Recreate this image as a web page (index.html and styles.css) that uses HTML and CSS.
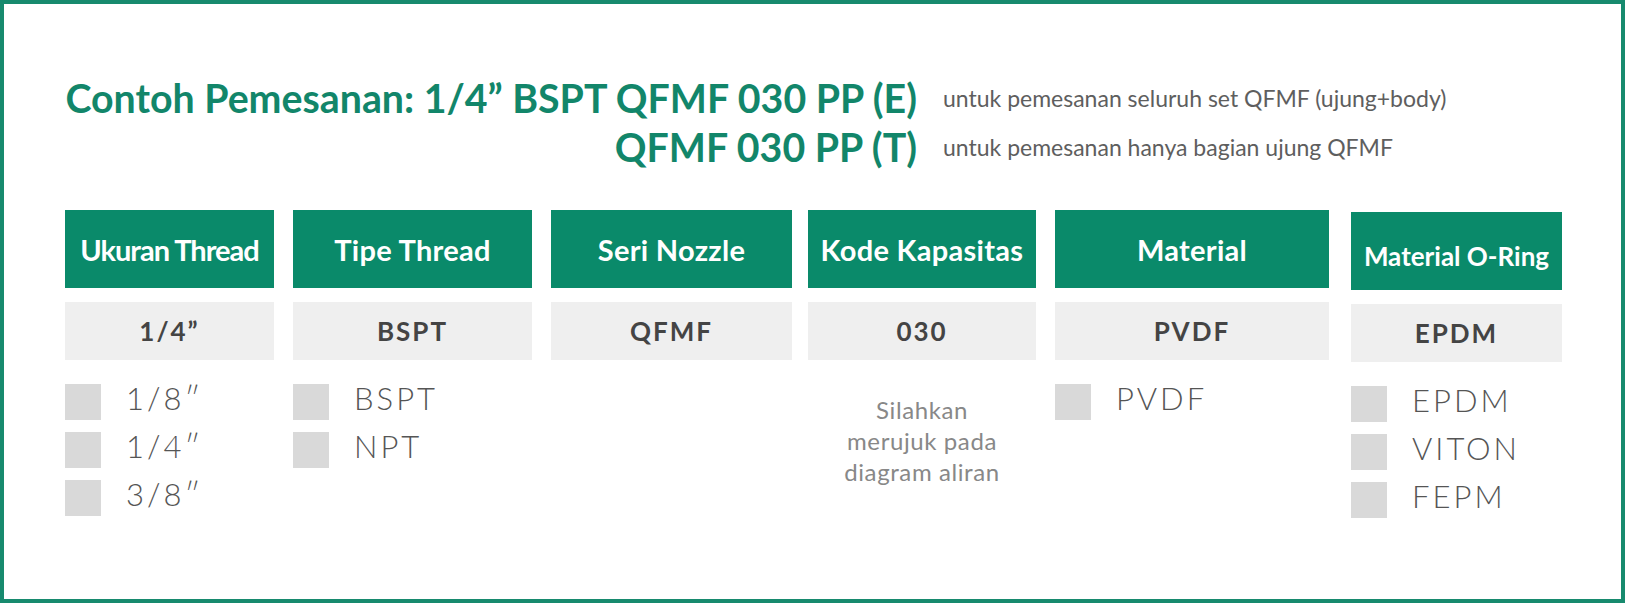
FILE: index.html
```html
<!DOCTYPE html>
<html lang="id">
<head>
<meta charset="utf-8">
<title>Contoh Pemesanan QFMF</title>
<link rel="stylesheet" href="styles.css">
</head>
<body>
<div class="frame">
  <div class="order">
    <div class="code">Contoh Pemesanan: 1/4” BSPT QFMF 030 PP (E)</div>
    <div class="note">untuk pemesanan seluruh set QFMF (ujung+body)</div>
    <div class="code">QFMF 030 PP (T)</div>
    <div class="note">untuk pemesanan hanya bagian ujung QFMF</div>
  </div>

  <div class="columns">
    <div class="col col-size">
      <div class="head head-tight">Ukuran Thread</div>
      <div class="value">1/4”</div>
      <div class="options">
        <div class="option"><span class="box"></span><span class="label">1/8″</span></div>
        <div class="option"><span class="box"></span><span class="label">1/4″</span></div>
        <div class="option"><span class="box"></span><span class="label">3/8″</span></div>
      </div>
    </div>
    <div class="col col-type">
      <div class="head">Tipe Thread</div>
      <div class="value">BSPT</div>
      <div class="options">
        <div class="option"><span class="box"></span><span class="label">BSPT</span></div>
        <div class="option"><span class="box"></span><span class="label">NPT</span></div>
      </div>
    </div>
    <div class="col col-series">
      <div class="head">Seri Nozzle</div>
      <div class="value">QFMF</div>
    </div>
    <div class="col col-code">
      <div class="head">Kode Kapasitas</div>
      <div class="value">030</div>
      <div class="hint">Silahkan<br>merujuk pada<br>diagram aliran</div>
    </div>
    <div class="col col-material">
      <div class="head">Material</div>
      <div class="value">PVDF</div>
      <div class="options">
        <div class="option"><span class="box"></span><span class="label">PVDF</span></div>
      </div>
    </div>
    <div class="col col-oring">
      <div class="head head-small">Material O-Ring</div>
      <div class="value">EPDM</div>
      <div class="options">
        <div class="option"><span class="box"></span><span class="label">EPDM</span></div>
        <div class="option"><span class="box"></span><span class="label">VITON</span></div>
        <div class="option"><span class="box"></span><span class="label">FEPM</span></div>
      </div>
    </div>
  </div>
</div>
</body>
</html>
```

FILE: styles.css
```css
html, body {
  margin: 0;
  padding: 0;
  background: #ffffff;
}

body {
  font-family: "Lato", "Liberation Sans", sans-serif;
}

.frame {
  box-sizing: border-box;
  width: 1625px;
  height: 603px;
  border: 4px solid #178a6e;
  padding: 69px 0 0 61px;
}

.order {
  display: grid;
  grid-template-columns: 852px auto;
  grid-auto-rows: 49px;
  column-gap: 26px;
  align-items: center;
}

.code {
  text-align: right;
  font-size: 39.3px;
  font-weight: 700;
  color: #12866a;
  line-height: 49px;
  white-space: nowrap;
}

.note {
  font-size: 23px;
  color: #5e5e5e;
  white-space: nowrap;
  line-height: 28px;
}

.columns {
  display: flex;
  gap: 19px;
  margin-top: 39px;
  align-items: flex-start;
}

.col-size { width: 209px; }
.col-type { width: 239px; }
.col-series { width: 241px; }
.col-code { width: 228px; margin-left: -3px; }
.col-material { width: 274px; }
.col-oring { width: 211px; margin-left: 3px; margin-top: 2px; }

.head {
  height: 78px;
  background: #0a8a6a;
  color: #ffffff;
  font-size: 29px;
  font-weight: 700;
  letter-spacing: 0.3px;
  display: flex;
  align-items: center;
  justify-content: center;
  white-space: nowrap;
}

.head-tight {
  letter-spacing: -1px;
}

.head-small {
  font-size: 26px;
  letter-spacing: 0;
  padding-top: 10px;
  box-sizing: border-box;
}

.value {
  margin-top: 14px;
  height: 58px;
  background: #efefef;
  color: #444444;
  font-size: 26px;
  font-weight: 700;
  letter-spacing: 2px;
  display: flex;
  align-items: center;
  justify-content: center;
}

.options {
  margin-top: 24px;
  display: flex;
  flex-direction: column;
  gap: 12px;
}

.option {
  display: flex;
  align-items: center;
  gap: 25px;
  height: 36px;
  font-size: 31px;
  font-weight: 300;
  letter-spacing: 3px;
  color: #555555;
}

.label {
  line-height: 28px;
  padding-bottom: 8px;
}

.box {
  width: 36px;
  height: 36px;
  background: #d9d9d9;
  flex: none;
}

.hint {
  margin-top: 34px;
  text-align: center;
  font-size: 24px;
  line-height: 31px;
  letter-spacing: 0.6px;
  color: #888888;
}
```
